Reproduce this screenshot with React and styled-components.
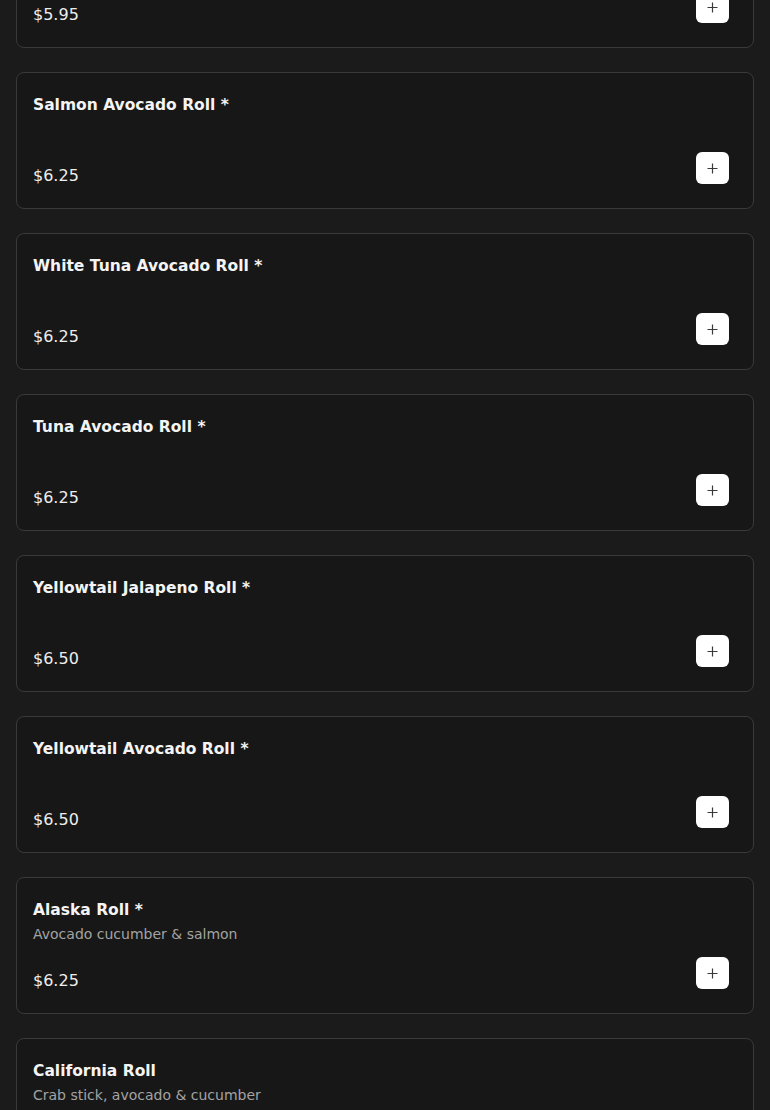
import React from 'react';
import styled, { createGlobalStyle } from 'styled-components';

const GlobalStyle = createGlobalStyle`
  html, body {
    margin: 0;
    padding: 0;
    background: #1b1b1b;
    font-family: "DejaVu Sans", "Noto Sans", sans-serif;
    overflow: hidden;
  }
  * { box-sizing: border-box; }
`;

const items = [
  { name: 'Avocado Roll', price: '$5.95' },
  { name: 'Salmon Avocado Roll *', price: '$6.25' },
  { name: 'White Tuna Avocado Roll *', price: '$6.25' },
  { name: 'Tuna Avocado Roll *', price: '$6.25' },
  { name: 'Yellowtail Jalapeno Roll *', price: '$6.50' },
  { name: 'Yellowtail Avocado Roll *', price: '$6.50' },
  { name: 'Alaska Roll *', desc: 'Avocado cucumber & salmon', price: '$6.25' },
  { name: 'California Roll', desc: 'Crab stick, avocado & cucumber', price: '$5.95' },
];

export default function App() {
  return (
    <>
      <GlobalStyle />
      <Page>
        {/* list is scrolled: first card sits partly above the fold */}
        <List>
          {items.map((item) => (
            <Card key={item.name}>
              <Info>
                <Title>{item.name}</Title>
                {item.desc && <Desc>{item.desc}</Desc>}
              </Info>
              <Footer>
                <Price>{item.price}</Price>
                <AddButton aria-label={`Add ${item.name}`}>
                  <svg width="11" height="11" viewBox="0 0 11 11" fill="none">
                    <path d="M5.5 0.5v10M0.5 5.5h10" stroke="#3a3a3a" strokeWidth="1.2" />
                  </svg>
                </AddButton>
              </Footer>
            </Card>
          ))}
        </List>
      </Page>
    </>
  );
}

const Page = styled.main`
  width: 100%;
  height: 1110px;
  padding: 0 16px;
  overflow: hidden;
`;

const List = styled.div`
  display: flex;
  flex-direction: column;
  gap: 24px;
  margin-top: -89px;
`;

const Card = styled.article`
  display: flex;
  flex-direction: column;
  background: #171717;
  border: 1px solid #3a3a3a;
  border-radius: 8px;
  padding: 20px 16px 20px;
`;

const Info = styled.div`
  min-height: 48px;
  margin-bottom: 23px;
`;

const Title = styled.h3`
  margin: 0;
  font-size: 15.5px;
  line-height: 24px;
  font-weight: 700;
  color: #f4f4f4;
`;

const Desc = styled.p`
  margin: 0;
  font-size: 14px;
  line-height: 24px;
  color: #a3a3a3;
`;

const Footer = styled.div`
  display: flex;
  justify-content: space-between;
  align-items: flex-end;
  height: 24px;
`;

const Price = styled.span`
  font-size: 16px;
  line-height: 24px;
  color: #ededed;
`;

const AddButton = styled.button`
  flex: none;
  width: 33px;
  height: 32px;
  margin: 0 8px 4px 0;
  border: none;
  border-radius: 6px;
  background: #ffffff;
  display: flex;
  align-items: center;
  justify-content: center;
  cursor: pointer;
  padding: 0;
`;
